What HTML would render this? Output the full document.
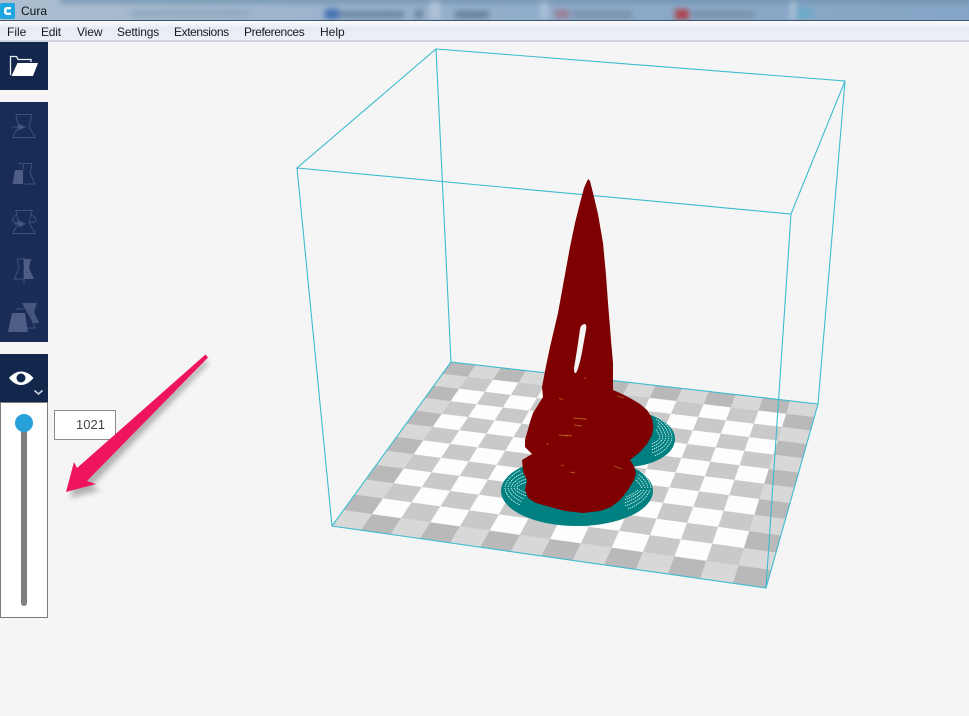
<!DOCTYPE html>
<html><head><meta charset="utf-8"><title>Cura</title>
<style>
html,body{margin:0;padding:0;background:#f5f5f5;width:969px;height:716px;overflow:hidden}
body{position:relative;font-family:"Liberation Sans",sans-serif}
svg{position:absolute;left:0;top:0}
.m{position:absolute;top:25px;font-size:12px;line-height:15px;color:#1a1a1a}
</style></head><body>
<svg id="s" width="969" height="716" viewBox="0 0 969 716" xmlns="http://www.w3.org/2000/svg">
<defs>
<linearGradient id="tb" x1="0" x2="1" y1="0" y2="0"><stop offset="0" stop-color="#adbfd1"/><stop offset=".3" stop-color="#9db5cd"/><stop offset=".6" stop-color="#8dabca"/><stop offset="1" stop-color="#84a5c5"/></linearGradient>
<linearGradient id="mb" x1="0" x2="0" y1="0" y2="1"><stop offset="0" stop-color="#fbfbfd"/><stop offset=".35" stop-color="#e8eaf5"/><stop offset="1" stop-color="#eceef8"/></linearGradient>
<filter id="bl" x="-20%" y="-100%" width="140%" height="300%"><feGaussianBlur stdDeviation="3"/></filter>
<filter id="sh" x="-20%" y="-20%" width="140%" height="140%"><feGaussianBlur stdDeviation="3"/></filter>
<clipPath id="tc"><rect x="0" y="0" width="969" height="20"/></clipPath>
</defs>
<rect width="969" height="716" fill="#f5f5f5"/>
<rect width="969" height="20" fill="url(#tb)"/>
<g clip-path="url(#tc)"><g filter="url(#bl)">
<rect x="325" y="9" width="14" height="10" fill="#4070b0"/><rect x="340" y="11" width="64" height="7" fill="#6b86a2"/>
<rect x="415" y="10" width="8" height="8" fill="#66809b"/><rect x="455" y="11" width="34" height="7" fill="#647d97"/>
<rect x="555" y="10" width="14" height="8" fill="#9a7890"/><rect x="572" y="11" width="60" height="7" fill="#7890aa"/>
<rect x="675" y="9" width="14" height="11" fill="#ab4550"/><rect x="692" y="11" width="62" height="7" fill="#7890aa"/>
<rect x="795" y="8" width="16" height="10" fill="#69a8c8"/><rect x="130" y="10" width="120" height="7" fill="#90a8c0"/>
<rect x="60" y="-2" width="910" height="5" fill="#6f90ae"/>
<rect x="430" y="2" width="10" height="18" fill="#b0c4d8"/><rect x="540" y="2" width="8" height="18" fill="#aac0d6"/><rect x="790" y="2" width="6" height="18" fill="#aac0d6"/>
</g></g>
<rect y="20" width="969" height="1.2" fill="#3f5468"/>
<rect y="21" width="969" height="20" fill="url(#mb)"/>
<rect y="40.500" width="969" height="1.200" fill="#bcbfc9"/>
<rect x="0" y="3" width="15" height="16" rx="2" fill="#1ea6e0"/>
<path d="M11 8.200 H7.400 Q5.200 8.200 5.200 10.500 V11.500 Q5.200 13.800 7.400 13.800 H11" fill="none" stroke="#fff" stroke-width="2.400"/>

<g id="plate"></g>

<g fill="none" stroke="#3dbbd0" stroke-width="1.100">
<path d="M436 49 L845 81 L791 214 L297 168 Z"/>
<path d="M297 168 L332 526 L766 588 L791 214"/>
<path d="M436 49 L451 362 L818 404 L845 81"/>
<path d="M332 526 L451 362"/>
<path d="M766 588 L818 404"/>
</g>

<g>
<ellipse cx="625" cy="439" rx="50" ry="28" fill="#008080"/>
<ellipse cx="577" cy="491" rx="76" ry="35" fill="#008080"/>
<g fill="none" stroke="#e9fcfc" stroke-width=".8" stroke-dasharray="1.400 .8">
<path d="M505 487 Q508 476 521 470"/><path d="M508 487 Q511 478 523 473"/><path d="M511 487 Q514 480 525 476"/><path d="M514 487 Q517 482 526 479"/><path d="M517 487 Q520 484 527 482"/>
<path d="M505 488 Q506 498 520 505"/><path d="M508 488 Q510 496 522 502"/><path d="M511 488 Q513 494 524 499"/><path d="M514 488 Q516 492 526 496"/><path d="M517 488 Q519 490 526 493"/>
<path d="M672 437 Q670 424 655 416"/><path d="M669 437 Q667 426 656 419"/><path d="M666 437 Q664 428 657 422"/><path d="M663 437 Q661 430 657 425"/><path d="M660 437 Q658 432 656 429"/>
<path d="M672 438 Q669 450 654 456"/><path d="M669 438 Q666 448 652 453"/><path d="M666 438 Q663 446 651 450"/><path d="M663 438 Q660 444 651 447"/><path d="M660 438 Q657 442 651 444"/>
<path d="M651 488 Q649 478 640 471"/><path d="M648 488 Q646 480 638 474"/><path d="M645 488 Q643 482 637 477"/><path d="M642 488 Q640 484 636 480"/>
<path d="M650 490 Q645 502 628 509"/><path d="M647 490 Q642 500 625 506"/><path d="M644 490 Q639 498 624 503"/><path d="M641 490 Q636 496 624 500"/><path d="M638 490 Q634 494 626 497"/>
</g>
</g>

<path fill="#7f0000" fill-rule="evenodd" d="M588 179 L590 181 L593 193 L598 214 L603 243 L606 275 L608 303 L611 340 L613 363 L613 378 L613 390 L620 393 L630 398 L640 404 L647 410 L652 418 L653.500 427 L652 435 L647 444 L640 452 L630 460 L634 466 L636 473 L634 480 L628 490 L620 500 L611 507 L600 511 L583 513 L565 511 L550 507 L536 503 L528 498 L525 490 L526 485 L527 480 L524 474 L523 470 L522 460 L532 454 L525 447 L525 440 L527 433 L530 422 L533 413 L538 405 L543 397 L542 387 L546 366 L550 347 L558 313 L564 280 L570 247 L575 223 L580 203 L584 188 Z M585 324 Q581 324 580 329 L577 350 L574 368 Q574 374 576 373 Q579 368 582 352 L586 330 Q587 325 585 324 Z"/>
<g stroke="#b4691e" stroke-width=".9" fill="none" opacity=".9">
<path d="M573 418 L587 419"/><path d="M566 435 L572 436"/><path d="M559 435 L568 436"/><path d="M614 466 L622 469"/><path d="M617 396 L624 398"/><path d="M559 398 L563 400"/><path d="M574 425 L582 426"/><path d="M547 443 L548 445"/><path d="M561 465 L564 466"/><path d="M584 378 L586 378"/><path d="M570 472 L575 473"/>
</g>

<rect x="0" y="42" width="48" height="48" fill="#13274d"/>
<path d="M10.500 75 V56.500 H16.500 L18 59.500 H31 V62" fill="none" stroke="#e8ecf4" stroke-width="1.300"/>
<path d="M11.500 76 L17.500 63 H38 L33 76 Z" fill="#fff"/>

<rect x="0" y="102" width="48" height="240" fill="#192c55"/>
<g fill="none" stroke="#3f5079" stroke-width="1">
<path d="M16 114.500 H32 L29 127 L35.500 137.500 H12.500 L18.500 127 Z"/>
<path d="M12 127 H22"/><path d="M19 124.500 L25 127 L19 129.500 Z" fill="#4b5b83"/>
<path d="M18 163.500 H32 L30 173 L35 184 H24"/><path d="M23 163.500 L24 170"/>
<path d="M15 170 H23 V184 H12.500 Z" fill="#4d5d85" stroke="none"/>
<path d="M16 210.500 H32 L29 223 L35.500 233.500 H12.500 L18.500 223 Z"/>
<path d="M16 215 Q12 218 12.500 220 Q13 223 18 223"/><path d="M31 215 Q36 217 36 220 Q35.500 223 30 222"/>
<path d="M19 221 L25 224 L19 227 Z" fill="#4b5b83"/><path d="M14 224 H20"/>
<path d="M24 257 V284"/><path d="M24 259 H17 L19 268 L14 279 H24"/>
<path d="M24 259 H31 L29 268 L34 279 H24 Z" fill="#4d5d85" stroke="none"/>
<path d="M22 303 H37 L34 312 L39 323 H33 Z" fill="#47587f" stroke="none"/>
<path d="M16 309 H29 L31 318 L35 328 H26"/>
<path d="M12 313 H25 L28 332 H8 Z" fill="#4d5d85" stroke="none"/>
</g>

<rect x="0" y="354" width="48" height="48" fill="#13274d"/>
<path d="M9 378 C13 373.500 17 371.500 21 371.500 C26 371.500 30 374 33.500 378 C30 382 26 385 21 385 C17 385 13 383 9 378 Z" fill="#fff"/>
<circle cx="21" cy="378" r="4.500" fill="#13274d"/>
<path d="M34.500 390.500 L38.500 394 L42.500 390.500" fill="none" stroke="#cfd6e4" stroke-width="1.500"/>

<rect x=".5" y="402.500" width="47" height="215" fill="#fff" stroke="#7b7b7b"/>
<rect x="21" y="423" width="6" height="183" rx="3" fill="#808080"/>
<circle cx="24" cy="423" r="9" fill="#27a1d9"/>
<rect x="54.500" y="410.500" width="61" height="29" fill="#fff" stroke="#8b8b8b"/>
<text x="76" y="429" font-family="Liberation Sans, sans-serif" font-size="13" fill="#444">1021</text>

<polygon points="205,360 209,363 92,486 101,490 70,498 78,468 82,474" fill="#000" opacity=".28" filter="url(#sh)"/>
<polygon points="205.500,354.500 208,357.500 87,481 96,484 66,492 74,462 77,468" fill="#ee1460"/>
</svg>
<div class="m" style="left:21px;top:4px;color:#111">Cura</div>
<div class="m" style="left:7px">File</div>
<div class="m" style="left:41px;letter-spacing:-.2px">Edit</div>
<div class="m" style="left:77px;letter-spacing:-.1px">View</div>
<div class="m" style="left:117px;letter-spacing:-.15px">Settings</div>
<div class="m" style="left:174px;letter-spacing:-.4px">Extensions</div>
<div class="m" style="left:244px;letter-spacing:-.4px">Preferences</div>
<div class="m" style="left:320px">Help</div>
<script>
(function(){
var NS='http://www.w3.org/2000/svg',g=document.getElementById('plate');
var P=[[332,526],[766,588],[818,404],[451,362]];
var x0=P[0][0],y0=P[0][1],x1=P[1][0],y1=P[1][1],x2=P[2][0],y2=P[2][1],x3=P[3][0],y3=P[3][1];
var dx1=x1-x2,dx2=x3-x2,sx=x0-x1+x2-x3,dy1=y1-y2,dy2=y3-y2,sy=y0-y1+y2-y3;
var d=dx1*dy2-dx2*dy1,a13=(sx*dy2-dx2*sy)/d,a23=(dx1*sy-sx*dy1)/d;
var a11=x1-x0+a13*x1,a21=x3-x0+a23*x3,a12=y1-y0+a13*y1,a22=y3-y0+a23*y3;
function m(u,v){u/=14;v/=12;var w=a13*u+a23*v+1;return ((a11*u+a21*v+x0)/w).toFixed(1)+','+((a12*u+a22*v+y0)/w).toFixed(1);}
for(var v=0;v<12;v++)for(var u=0;u<14;u++){
 var ring=(u==0||v==0||u==13||v==11),dark=(u+v)%2==1;
 var c=ring?(dark?'#b9b9b9':'#d8d8d8'):(dark?'#c9c9c9':'#fdfdfd');
 var p=document.createElementNS(NS,'polygon');
 p.setAttribute('points',[m(u,v),m(u+1,v),m(u+1,v+1),m(u,v+1)].join(' '));
 p.setAttribute('fill',c);p.setAttribute('stroke',c);p.setAttribute('stroke-width','.3');
 g.appendChild(p);
}
})();
</script>
</body></html>
